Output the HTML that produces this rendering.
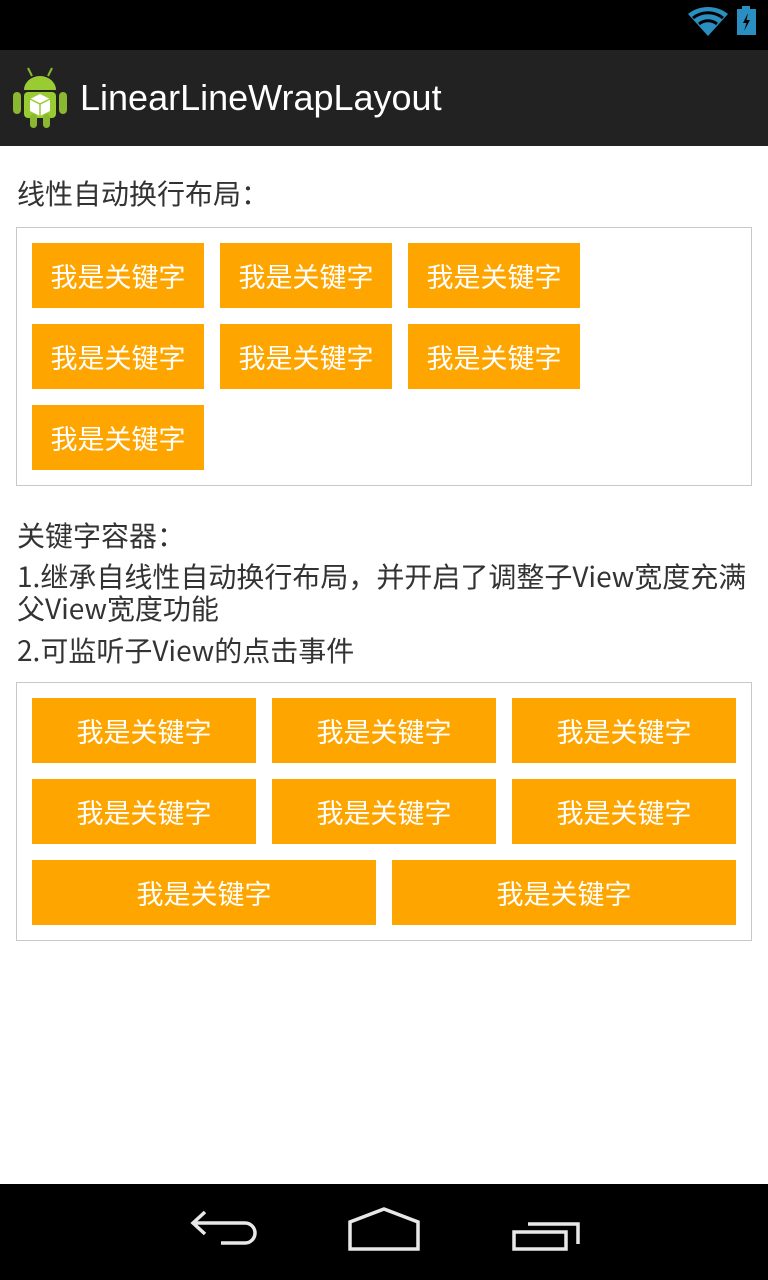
<!DOCTYPE html>
<html><head><meta charset="utf-8"><style>
*{margin:0;padding:0;box-sizing:border-box}
body{width:768px;height:1280px;position:relative;background:#fff;overflow:hidden;font-family:"Liberation Sans","Noto Sans CJK SC",sans-serif}
.a{position:absolute}
.t{position:absolute;left:17px;font-size:28px;color:#333;white-space:nowrap;line-height:32px;font-family:"Noto Sans CJK SC",sans-serif}
.b{position:absolute;background:#FFA500;color:#fff;font-size:27px;height:65px;line-height:65px;text-align:center;font-family:"Noto Sans CJK SC",sans-serif}
.box{position:absolute;left:16px;width:736px;border:1px solid #c8c8c8}
</style></head><body>
<div class="a" style="left:0;top:0;width:768px;height:50px;background:#000"></div>
<svg class="a" style="left:688px;top:4px" width="72" height="34" viewBox="0 0 72 34">
<path d="M0 10 A32 32 0 0 1 40 10 L20 32 Z" fill="#2a8fc0"/>
<path d="M5 14 A24 24 0 0 1 35 14" stroke="#000" stroke-width="3" fill="none"/>
<path d="M11 20 A14 14 0 0 1 29 20" stroke="#000" stroke-width="3" fill="none"/>
<rect x="54" y="2" width="8" height="4" fill="#2a8fc0"/>
<rect x="49" y="5" width="19" height="26" fill="#2a8fc0"/>
<path d="M60 9 L55 19 L58.5 19 L56 27 L62 16 L58.5 16 Z" fill="#000"/>
</svg>
<div class="a" style="left:0;top:50px;width:768px;height:96px;background:#222"></div>
<svg class="a" style="left:10px;top:64px" width="60" height="66" viewBox="0 0 60 66">
<line x1="18" y1="4" x2="22" y2="12" stroke="#8ab830" stroke-width="2"/>
<line x1="42" y1="4" x2="38" y2="12" stroke="#8ab830" stroke-width="2"/>
<path d="M14 26 A16 14 0 0 1 46 26 Z" fill="#9c3"/>
<rect x="14" y="28" width="32" height="26" rx="4" fill="#9c3"/>
<rect x="3" y="28" width="8" height="22" rx="4" fill="#8ab830"/>
<rect x="49" y="28" width="8" height="22" rx="4" fill="#8ab830"/>
<rect x="20" y="50" width="7" height="14" rx="3.5" fill="#8ab830"/>
<rect x="33" y="50" width="7" height="14" rx="3.5" fill="#8ab830"/>
<path d="M30 30 L40 35 L40 47 L30 52 L20 47 L20 35 Z" fill="#fff"/>
<path d="M20 35 L30 40 L40 35 M30 40 L30 52" stroke="#9c3" stroke-width="1.5" fill="none"/>
</svg>
<div class="a" style="left:80px;top:76px;font-size:36px;color:#fff;line-height:44px">LinearLineWrapLayout</div>

<div class="t" style="top:177px">线性自动换行布局：</div>
<div class="box" style="top:227px;height:259px"></div>
<div class="b" style="left:32px;top:243px;width:172px">我是关键字</div>
<div class="b" style="left:220px;top:243px;width:172px">我是关键字</div>
<div class="b" style="left:408px;top:243px;width:172px">我是关键字</div>
<div class="b" style="left:32px;top:324px;width:172px">我是关键字</div>
<div class="b" style="left:220px;top:324px;width:172px">我是关键字</div>
<div class="b" style="left:408px;top:324px;width:172px">我是关键字</div>
<div class="b" style="left:32px;top:405px;width:172px">我是关键字</div>

<div class="t" style="top:519px">关键字容器：</div>
<div class="t" style="top:560px">1.继承自线性自动换行布局，并开启了调整子View宽度充满</div>
<div class="t" style="top:592px">父View宽度功能</div>
<div class="t" style="top:634px">2.可监听子View的点击事件</div>
<div class="box" style="top:682px;height:259px"></div>
<div class="b" style="left:32px;top:698px;width:224px">我是关键字</div>
<div class="b" style="left:272px;top:698px;width:224px">我是关键字</div>
<div class="b" style="left:512px;top:698px;width:224px">我是关键字</div>
<div class="b" style="left:32px;top:779px;width:224px">我是关键字</div>
<div class="b" style="left:272px;top:779px;width:224px">我是关键字</div>
<div class="b" style="left:512px;top:779px;width:224px">我是关键字</div>
<div class="b" style="left:32px;top:860px;width:344px">我是关键字</div>
<div class="b" style="left:392px;top:860px;width:344px">我是关键字</div>

<div class="a" style="left:0;top:1184px;width:768px;height:96px;background:#000"></div>
<svg class="a" style="left:0;top:1184px" width="768" height="96" viewBox="0 0 768 96" fill="none" stroke="#e8e8e8" stroke-width="3.5">
<path d="M205 50 L193 39 L205 28 M193 39 L245 39 A10 10 0 0 1 245 59 L221 59" stroke-linejoin="miter"/>
<path d="M350 65 L350 38 L384 25 L418 38 L418 65 Z"/>
<path d="M514 65 L514 48 L566 48 L566 65 Z M528 40 L578 40 L578 60"/>
</svg>
</body></html>
